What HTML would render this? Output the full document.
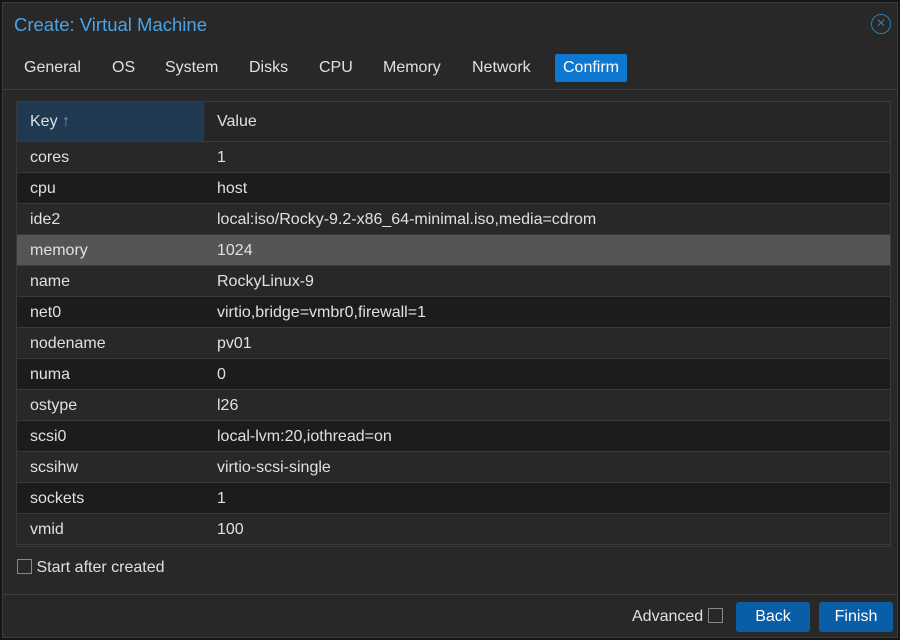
<!DOCTYPE html><html><head><style>
body{margin:0;width:900px;height:640px;background:#161616;font-family:"Liberation Sans",sans-serif;font-size:16px;color:#e0e0e0;overflow:hidden}
.win{position:absolute;left:2px;top:2px;width:896px;height:636px;background:#282828;border:1px solid #3a3a3a;box-sizing:border-box}
.title{position:absolute;left:11px;top:11px;font-size:18.5px;color:#4ba3e6}
.close{position:absolute;left:868px;top:11px;width:18px;height:18px;border:1.5px solid #2a7fb0;border-radius:50%;color:#2a7fb0;font-size:16px;line-height:18px;text-align:center}
.tabs{position:absolute;left:0;top:50px;height:36px;width:100%;border-bottom:1px solid #3f3f3f}
.tab{position:absolute;top:1px;height:28px;line-height:28px;padding:0 8px}
.tab.on{background:#0e77cf;color:#fff;border-radius:2px}
.grid{position:absolute;left:13px;top:98px;width:875px;height:446px;border:1px solid #3a3a3a;box-sizing:border-box}
.row{position:absolute;left:0;width:873px;height:30px;line-height:31px;border-bottom:1px solid #3a3a3a}
.k{position:absolute;left:13px}.v{position:absolute;left:200px}
.hd{top:0;height:39px;line-height:39px;background:#262626}
.hk{position:absolute;left:0;top:0;width:186px;height:39px;background:#1f3950;border-right:1px solid #3a3a3a}
.cb{display:inline-block;width:15px;height:15px;border:1px solid #888;vertical-align:-2px;box-sizing:border-box}
.btn{position:absolute;top:599px;height:30px;line-height:30px;background:#0a5ea6;color:#fff;border-radius:3px;text-align:center}
</style></head><body><div class="win">
<div class="title">Create: Virtual Machine</div><div class="close">×</div>
<div class="tabs">
<span class="tab" style="left:13px">General</span><span class="tab" style="left:101px">OS</span><span class="tab" style="left:154px">System</span><span class="tab" style="left:238px">Disks</span><span class="tab" style="left:308px">CPU</span><span class="tab" style="left:372px">Memory</span><span class="tab" style="left:461px">Network</span><span class="tab on" style="left:552px">Confirm</span></div>
<div class="grid">
<div class="row hd"><div class="hk"></div><span class="k">Key <span style="color:#6a9cc0">↑</span></span><span class="v">Value</span></div>
<div id="rows"></div>
</div>
<div style="position:absolute;left:0;top:591px;width:100%;border-top:1px solid #3f3f3f"></div>
<div style="position:absolute;left:14px;top:556px"><span class="cb"></span> Start after created</div>
<div style="position:absolute;left:629px;top:605px">Advanced <span class="cb"></span></div>
<div class="btn" style="left:733px;width:74px">Back</div>
<div class="btn" style="left:816px;width:74px">Finish</div>
</div>
<script>
var d=[["cores","1"],["cpu","host"],["ide2","local:iso/Rocky-9.2-x86_64-minimal.iso,media=cdrom"],["memory","1024"],["name","RockyLinux-9"],["net0","virtio,bridge=vmbr0,firewall=1"],["nodename","pv01"],["numa","0"],["ostype","l26"],["scsi0","local-lvm:20,iothread=on"],["scsihw","virtio-scsi-single"],["sockets","1"],["vmid","100"]];
var h="";d.forEach(function(r,i){var bg=i==3?"#555":(i%2?"#1c1c1c":"#282828");h+='<div class="row" style="top:'+(40+i*31)+'px;background:'+bg+'"><span class="k">'+r[0]+'</span><span class="v">'+r[1]+'</span></div>'});
document.getElementById("rows").outerHTML=h;
</script></body></html>
